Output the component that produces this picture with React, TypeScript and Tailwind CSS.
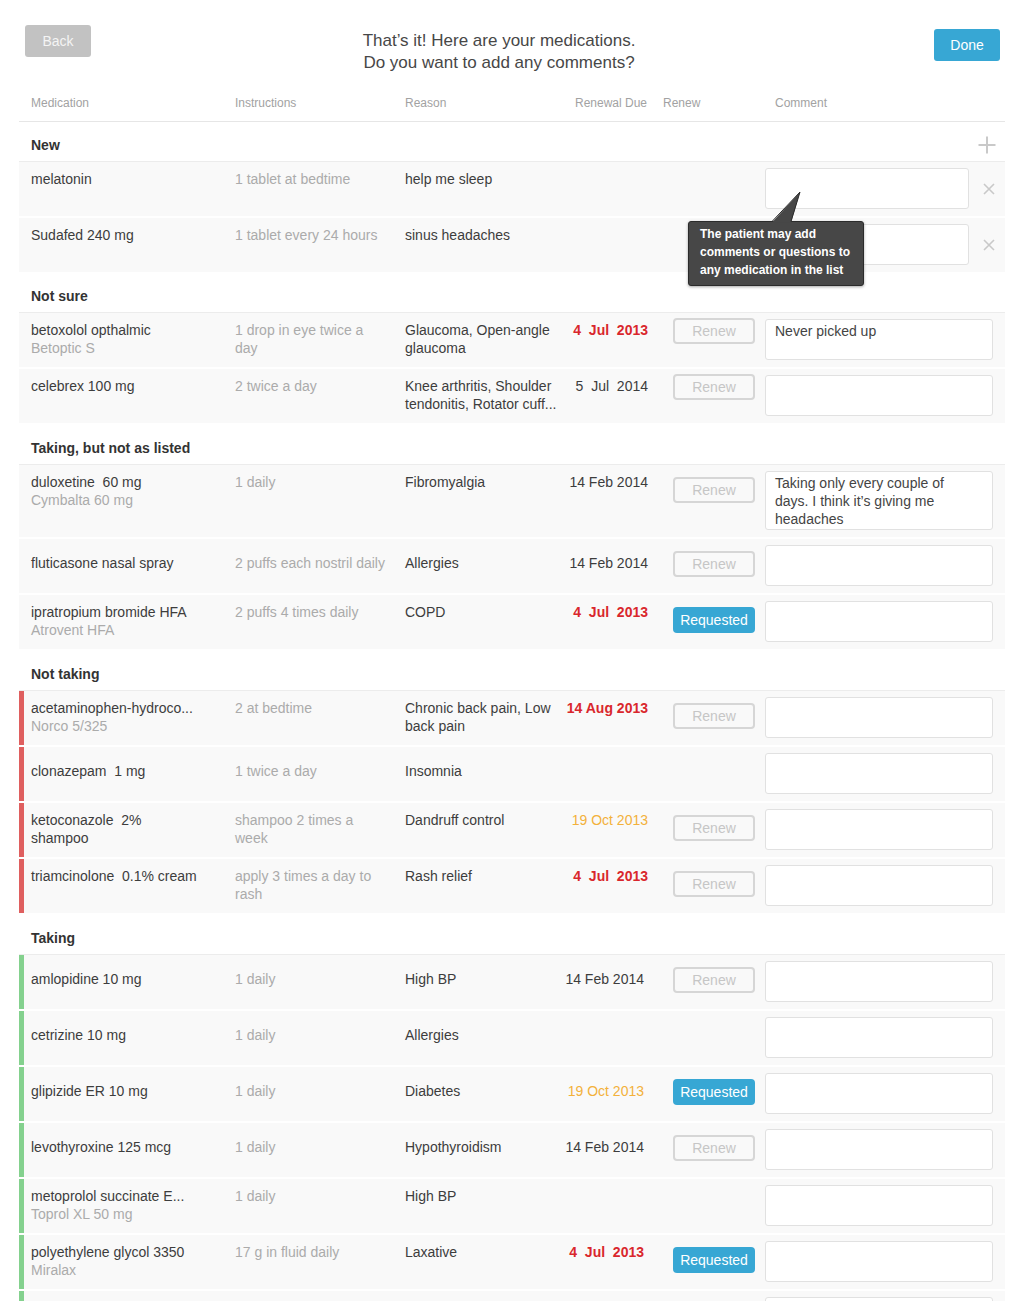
import clsx from 'clsx';

type Row = {
  med: string[];
  sub?: string;
  instr: string[];
  reason: string[];
  date?: string;
  tone?: 'red' | 'orange' | 'plain';
  renew?: 'renew' | 'requested';
  comment?: string[];
  mid?: boolean;
  tall?: boolean;
  empty?: boolean;
};

type Section = {
  title: string;
  headPad: string;
  bar?: 'red' | 'green';
  btnNear?: boolean;
  isNew?: boolean;
  shiftDate?: boolean;
  rows: Row[];
};

const SECTIONS: Section[] = [
  {
    title: 'New',
    headPad: 'pt-[14px]',
    isNew: true,
    rows: [
      { med: ['melatonin'], instr: ['1 tablet at bedtime'], reason: ['help me sleep'] },
      { med: ['Sudafed 240 mg'], instr: ['1 tablet every 24 hours'], reason: ['sinus headaches'] },
    ],
  },
  {
    title: 'Not sure',
    headPad: 'pt-[15px]',
    btnNear: true,
    rows: [
      {
        med: ['betoxolol opthalmic'],
        sub: 'Betoptic S',
        instr: ['1 drop in eye twice a', 'day'],
        reason: ['Glaucoma, Open-angle', 'glaucoma'],
        date: '4  Jul  2013',
        tone: 'red',
        renew: 'renew',
        comment: ['Never picked up'],
      },
      {
        med: ['celebrex 100 mg'],
        instr: ['2 twice a day'],
        reason: ['Knee arthritis, Shoulder', 'tendonitis, Rotator cuff...'],
        date: '5  Jul  2014',
        renew: 'renew',
      },
    ],
  },
  {
    title: 'Taking, but not as listed',
    headPad: 'pt-[16px]',
    rows: [
      {
        med: ['duloxetine  60 mg'],
        sub: 'Cymbalta 60 mg',
        instr: ['1 daily'],
        reason: ['Fibromyalgia'],
        date: '14 Feb 2014',
        renew: 'renew',
        comment: ['Taking only every couple of', 'days. I think it’s giving me', 'headaches'],
        tall: true,
      },
      {
        med: ['fluticasone nasal spray'],
        instr: ['2 puffs each nostril daily'],
        reason: ['Allergies'],
        date: '14 Feb 2014',
        renew: 'renew',
        mid: true,
      },
      {
        med: ['ipratropium bromide HFA'],
        sub: 'Atrovent HFA',
        instr: ['2 puffs 4 times daily'],
        reason: ['COPD'],
        date: '4  Jul  2013',
        tone: 'red',
        renew: 'requested',
      },
    ],
  },
  {
    title: 'Not taking',
    headPad: 'pt-[16px]',
    bar: 'red',
    rows: [
      {
        med: ['acetaminophen-hydroco...'],
        sub: 'Norco 5/325',
        instr: ['2 at bedtime'],
        reason: ['Chronic back pain, Low', 'back pain'],
        date: '14 Aug 2013',
        tone: 'red',
        renew: 'renew',
      },
      { med: ['clonazepam  1 mg'], instr: ['1 twice a day'], reason: ['Insomnia'], mid: true },
      {
        med: ['ketoconazole  2%', 'shampoo'],
        instr: ['shampoo 2 times a', 'week'],
        reason: ['Dandruff control'],
        date: '19 Oct 2013',
        tone: 'orange',
        renew: 'renew',
      },
      {
        med: ['triamcinolone  0.1% cream'],
        instr: ['apply 3 times a day to', 'rash'],
        reason: ['Rash relief'],
        date: '4  Jul  2013',
        tone: 'red',
        renew: 'renew',
      },
    ],
  },
  {
    title: 'Taking',
    headPad: 'pt-[16px]',
    bar: 'green',
    shiftDate: true,
    rows: [
      { med: ['amlopidine 10 mg'], instr: ['1 daily'], reason: ['High BP'], date: '14 Feb 2014', renew: 'renew', mid: true },
      { med: ['cetrizine 10 mg'], instr: ['1 daily'], reason: ['Allergies'], mid: true },
      {
        med: ['glipizide ER 10 mg'],
        instr: ['1 daily'],
        reason: ['Diabetes'],
        date: '19 Oct 2013',
        tone: 'orange',
        renew: 'requested',
        mid: true,
      },
      {
        med: ['levothyroxine 125 mcg'],
        instr: ['1 daily'],
        reason: ['Hypothyroidism'],
        date: '14 Feb 2014',
        renew: 'renew',
        mid: true,
      },
      { med: ['metoprolol succinate E...'], sub: 'Toprol XL 50 mg', instr: ['1 daily'], reason: ['High BP'] },
      {
        med: ['polyethylene glycol 3350'],
        sub: 'Miralax',
        instr: ['17 g in fluid daily'],
        reason: ['Laxative'],
        date: '4  Jul  2013',
        tone: 'red',
        renew: 'requested',
      },
      { med: [], instr: [], reason: [], empty: true },
    ],
  },
];

function CloseIcon() {
  return (
    <svg width="12" height="12" viewBox="0 0 12 12">
      <path d="M1 1 L11 11 M11 1 L1 11" stroke="#c9c9c9" strokeWidth="1.6" />
    </svg>
  );
}

function PlusIcon() {
  return (
    <svg width="18" height="18" viewBox="0 0 18 18">
      <path d="M9 0.5 V17.5 M0.5 9 H17.5" stroke="#c9c9c9" strokeWidth="2" />
    </svg>
  );
}

function MedRow({ row, section }: { row: Row; section: Section }) {
  const top = row.mid ? 'pt-[15px]' : 'pt-[8px]';
  return (
    <div
      className={clsx(
        'flex items-start bg-[#f9f9f9] border-l-[5px] pl-[7px] text-[14px] leading-[18px]',
        section.bar === 'red' && 'border-[#df5f5f]',
        section.bar === 'green' && 'border-[#84d18e]',
        !section.bar && 'border-transparent'
      )}
    >
      <div className={clsx('w-[204px] shrink-0', top)}>
        {row.med.map((l) => (
          <div key={l} className="whitespace-pre">{l}</div>
        ))}
        {row.sub && <div className="text-[#ababab]">{row.sub}</div>}
      </div>
      <div className={clsx('w-[170px] shrink-0 text-[#ababab]', top)}>
        {row.instr.map((l) => (
          <div key={l} className="whitespace-nowrap">{l}</div>
        ))}
      </div>
      <div className={clsx('w-[160px] shrink-0', top)}>
        {row.reason.map((l) => (
          <div key={l} className="whitespace-nowrap">{l}</div>
        ))}
      </div>
      <div
        className={clsx(
          'w-[83px] shrink-0 text-right whitespace-pre',
          top,
          section.shiftDate && 'pr-[4px]',
          row.tone === 'red' && 'font-bold text-[#d9272d]',
          row.tone === 'orange' && 'text-[#f3b13b]'
        )}
      >
        {row.date}
      </div>
      <div className="w-[107px] shrink-0 pl-[25px]">
        {row.renew === 'renew' && (
          <div
            className={clsx(
              'flex h-[26px] w-[82px] items-center justify-center rounded-[4px] border-2 border-[#d6d6d6] text-[#c6c6c6]',
              section.btnNear ? 'mt-[5px]' : 'mt-[12px]'
            )}
          >
            Renew
          </div>
        )}
        {row.renew === 'requested' && (
          <div className="mt-[12px] flex h-[26px] w-[82px] items-center justify-center rounded-[4px] bg-[#37a7d4] text-white">
            Requested
          </div>
        )}
      </div>
      <div
        className={clsx(
          'ml-[10px] mt-[6px] mb-[7px] shrink-0 rounded-[3px] border border-[#e1e1e1] bg-white px-[9px] pt-[2px] text-[#444]',
          section.isNew ? 'w-[204px]' : 'w-[228px]',
          row.tall ? 'h-[59px]' : 'h-[41px]'
        )}
      >
        {row.comment?.map((l) => (
          <div key={l} className="whitespace-nowrap">{l}</div>
        ))}
      </div>
      {section.isNew && (
        <div className="flex flex-1 self-stretch items-center justify-center pl-[3px]">
          <CloseIcon />
        </div>
      )}
    </div>
  );
}

export default function App() {
  return (
    <div className="relative min-h-[1301px] w-[1024px] bg-white font-['Liberation_Sans',Arial,sans-serif] text-[#3d3d3d]">
      {/* top bar */}
      <div className="flex h-[88px] items-start">
        <div className="w-[330px] pl-[25px]">
          <div className="mt-[25px] flex h-[32px] w-[66px] items-center justify-center rounded-[3px] bg-[#c2c2c2] text-[14px] text-[#f4f4f4]">
            Back
          </div>
        </div>
        <div className="mt-[30px] w-[338px] text-center text-[17px] leading-[22px] text-[#474747]">
          <div>That’s it! Here are your medications.</div>
          <div>Do you want to add any comments?</div>
        </div>
        <div className="flex flex-1 justify-end pr-[24px]">
          <div className="mt-[29px] flex h-[32px] w-[66px] items-center justify-center rounded-[3px] bg-[#37a7d4] text-[14px] text-white">
            Done
          </div>
        </div>
      </div>

      <div className="ml-[19px] w-[986px]">
        {/* column headings */}
        <div className="flex border-b border-[#e6e6e6] pl-[12px] pt-[8px] pb-[11px] text-[12px] leading-[14px] text-[#a2a2a2]">
          <div className="w-[204px]">Medication</div>
          <div className="w-[170px]">Instructions</div>
          <div className="w-[170px]">Reason</div>
          <div className="w-[88px]">Renewal Due</div>
          <div className="w-[112px]">Renew</div>
          <div>Comment</div>
        </div>

        {SECTIONS.map((section) => (
          <div key={section.title}>
            <div
              className={clsx(
                'flex items-center justify-between border-b border-[#ececec] pl-[12px] pr-[9px] pb-[7px] text-[14px] leading-[18px] font-bold text-[#333]',
                section.headPad
              )}
            >
              <span>{section.title}</span>
              {section.isNew && <PlusIcon />}
            </div>
            <div className="flex flex-col gap-[2px]">
              {section.rows.map((row, i) => (
                <MedRow key={i} row={row} section={section} />
              ))}
            </div>
          </div>
        ))}
      </div>

      {/* tooltip */}
      <div className="absolute left-[688px] top-[221px] h-[65px] w-[176px] rounded-[3px] border border-[#2b2b2b] bg-[#474747] pl-[11px] pt-[3px] text-[12px] leading-[18px] font-bold text-white shadow-[0_1px_3px_rgba(0,0,0,0.35)]">
        <div>The patient may add</div>
        <div>comments or questions to</div>
        <div>any medication in the list</div>
      </div>
      <svg className="absolute left-[764px] top-[188px]" width="40" height="36" viewBox="0 0 40 36">
        <polygon points="8,34.5 36,4 27,34.5" fill="#474747" />
        <polyline points="8,33.5 36,4 27,33.5" fill="none" stroke="#2b2b2b" strokeWidth="1" />
      </svg>
    </div>
  );
}
